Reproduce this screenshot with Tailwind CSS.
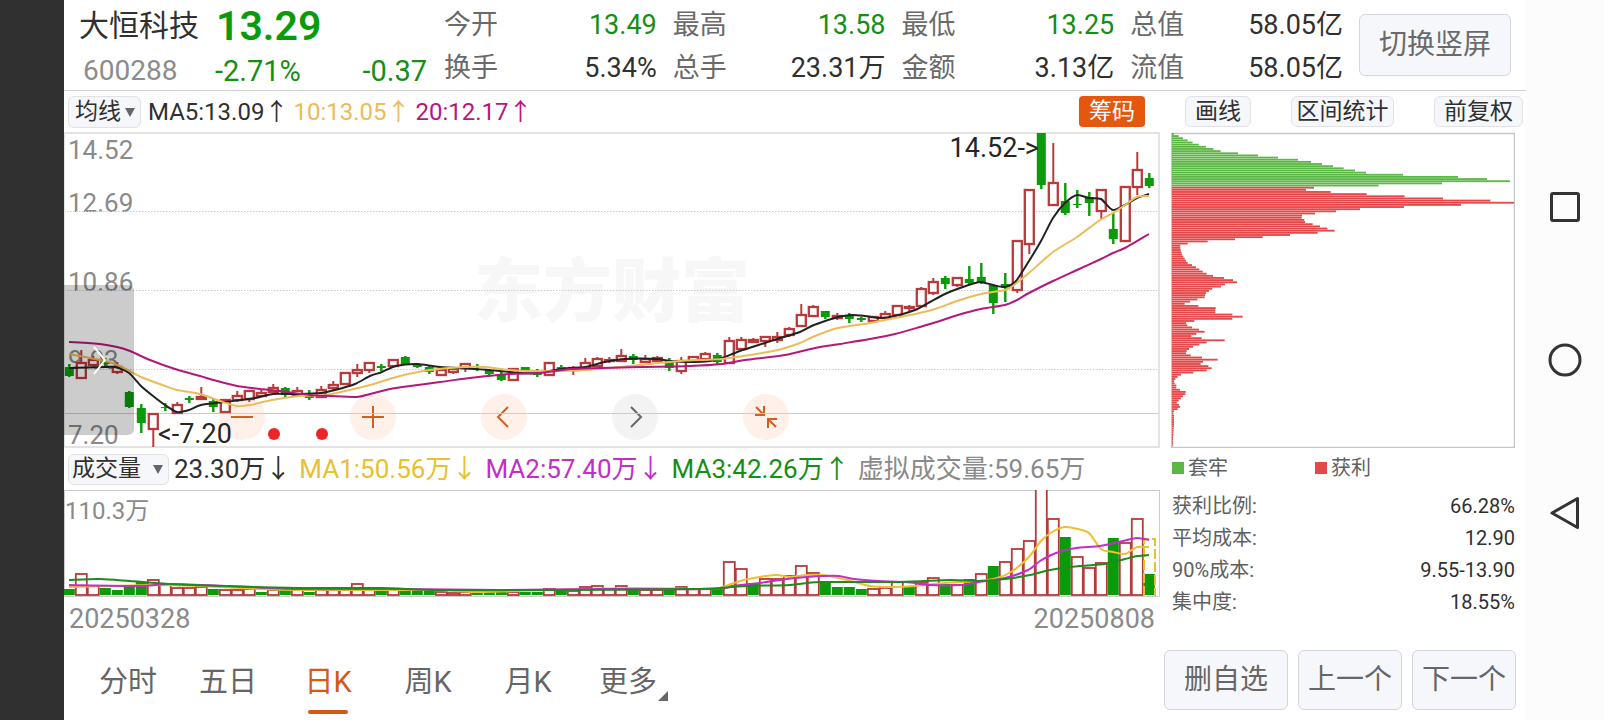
<!DOCTYPE html>
<html lang="zh-CN">
<head>
<meta charset="utf-8">
<meta name="viewport" content="width=device-width, initial-scale=1">
<title>大恒科技 600288</title>
<script src="https://cdn.jsdelivr.net/npm/@tailwindcss/browser@4"></script>
</head>
<body class="bg-white">
<div class="flex min-h-screen font-[Roboto,'Noto_Sans_CJK_SC',sans-serif] text-[#303030]">
  <div class="w-16 shrink-0 bg-[#303030]"></div>

  <main class="flex min-w-0 flex-1 flex-col">
    <header class="flex h-[91px] items-stretch border-b border-[#d2d2d2] pr-[15px]">
      <div class="w-[363px] shrink-0 pl-[15px]">
        <div class="flex h-[51px] items-center gap-[17px]">
          <h1 class="text-[30px] leading-[50px]">大恒科技</h1>
          <strong class="text-[41px] leading-[50px] font-semibold text-[#0a9b0a]">13.29</strong>
        </div>
        <div class="flex h-10 items-center text-[29px] leading-10 text-[#148f14]">
          <span class="w-[136px] pl-1 text-[28px] text-[#8c8c8c]">600288</span>
          <span class="flex-1">-2.71%</span>
          <span>-0.37</span>
        </div>
      </div>
      <dl class="grid flex-1 grid-cols-4 gap-x-4 pt-1 pl-[17px] text-[27px] leading-[42px]">
        <div class="flex justify-between"><dt class="text-[#6a6a6a]">今开</dt><dd class="text-[#148f14]">13.49</dd></div>
        <div class="flex justify-between"><dt class="text-[#6a6a6a]">最高</dt><dd class="text-[#148f14]">13.58</dd></div>
        <div class="flex justify-between"><dt class="text-[#6a6a6a]">最低</dt><dd class="text-[#148f14]">13.25</dd></div>
        <div class="flex justify-between"><dt class="text-[#6a6a6a]">总值</dt><dd>58.05亿</dd></div>
        <div class="flex justify-between"><dt class="text-[#6a6a6a]">换手</dt><dd>5.34%</dd></div>
        <div class="flex justify-between"><dt class="text-[#6a6a6a]">总手</dt><dd>23.31万</dd></div>
        <div class="flex justify-between"><dt class="text-[#6a6a6a]">金额</dt><dd>3.13亿</dd></div>
        <div class="flex justify-between"><dt class="text-[#6a6a6a]">流值</dt><dd>58.05亿</dd></div>
      </dl>
      <button class="mt-3.5 ml-4 h-[62px] w-[152px] shrink-0 rounded-md border border-[#d3d6dc] bg-[#f6f7fa] text-[28px] text-[#6a6a6a]">切换竖屏</button>
    </header>

    <div class="flex h-[41px] items-center pr-[3px] pl-1 text-[23px]">
      <label class="relative flex">
        <select aria-label="主图指标" class="h-8 w-[73px] appearance-none rounded-md border border-[#e0e2e6] bg-[#f6f7fa] pl-1.5 text-[23px] leading-[29px]"><option>均线</option></select>
        <svg class="pointer-events-none absolute top-3 right-1.5" width="10" height="9" viewBox="0 0 10 9"><path d="M0 0H10L5 9Z" fill="#666"/></svg>
      </label>
      <p class="flex gap-[5px] pl-[7px] text-2xl leading-8 whitespace-nowrap">
        <span>MA5:13.09↑</span><span class="text-[#ecbc58]">10:13.05↑</span><span class="text-[#b5187c]">20:12.17↑</span>
      </p>
      <div class="ml-auto flex gap-10">
        <button class="h-[31px] w-[66px] rounded bg-[#e5570c] leading-[29px] text-white">筹码</button>
        <button class="h-[31px] w-[66px] rounded-md border border-[#e0e2e6] bg-[#f6f7fa] leading-[27px]">画线</button>
        <button class="h-[31px] w-[103px] rounded-md border border-[#e0e2e6] bg-[#f6f7fa] leading-[27px]">区间统计</button>
        <button class="h-[31px] w-[89px] rounded-md border border-[#e0e2e6] bg-[#f6f7fa] leading-[27px]">前复权</button>
      </div>
    </div>

    <div class="flex flex-1">
      <div class="min-w-0 flex-1">
        <section class="relative h-[316px] text-[26px] leading-[30px] text-[#8a8a8a]" aria-label="日K线图">
          <div class="absolute top-[116px] left-[410px] text-[69px] leading-[90px] font-black text-[#f7f7f7]">东方财富</div>
          <span class="absolute top-[3px] left-1">14.52</span>
          <span class="absolute top-14 left-1">12.69</span>
          <span class="absolute top-[135px] left-1">10.86</span>
          <span class="absolute top-[213px] left-1">9.03</span>
          <span class="absolute top-[288px] left-1">7.20</span>
          <div class="absolute top-[262px] left-[155px] flex gap-[85px]">
            <button aria-label="缩小" class="size-[46px] rounded-full bg-[#fff0e9]"><svg viewBox="0 0 46 46" fill="none" stroke="#cf6020" stroke-width="2"><path d="M12 23H34"/></svg></button>
            <button aria-label="放大" class="size-[46px] rounded-full bg-[#fff0e9]"><svg viewBox="0 0 46 46" fill="none" stroke="#cf6020" stroke-width="2"><path d="M12 23H34M23 12V34"/></svg></button>
            <button aria-label="向左" class="size-[46px] rounded-full bg-[#fff0e9]"><svg viewBox="0 0 46 46" fill="none" stroke="#cf6020" stroke-width="2"><path d="M27 13L17 23L27 33"/></svg></button>
            <button aria-label="向右" class="size-[46px] rounded-full bg-[#f3f3f3]"><svg viewBox="0 0 46 46" fill="none" stroke="#666" stroke-width="2"><path d="M19 13L29 23L19 33"/></svg></button>
            <button aria-label="收起" class="size-[46px] rounded-full bg-[#fff0e9]"><svg viewBox="0 0 46 46" fill="none" stroke="#cf6020" stroke-width="2"><path d="M13 13L21 21M21 12V21H12M33 33L25 25M25 34V25H34"/></svg></button>
          </div>
          <svg id="price" class="pointer-events-none absolute inset-0 size-full" viewBox="64 132 1096 316" preserveAspectRatio="none"></svg>
          <span class="absolute top-px right-[121px] text-[27px] text-[#262626]">14.52-&gt;</span>
          <span class="absolute top-[287px] left-[94px] text-[27px] text-[#262626]">&lt;-7.20</span>
          <button aria-label="展开侧栏" class="absolute top-[153px] left-0 h-[150px] w-[70px] rounded-r-md bg-black/20"><svg class="size-full" viewBox="0 0 70 150" fill="none" stroke="#fff" stroke-width="2"><path d="M30 62L41 75L30 89"/></svg></button>
        </section>

        <div class="flex h-[42px] items-center gap-2 pl-1 text-[26px] whitespace-nowrap">
          <div class="flex items-center gap-[5px]">
            <label class="relative flex">
              <select aria-label="副图指标" class="h-[31px] w-[101px] appearance-none rounded-md border border-[#e0e2e6] bg-[#f6f7fa] pl-[3px] text-[23px] leading-[28px]"><option>成交量</option></select>
              <svg class="pointer-events-none absolute top-[11px] right-1.5" width="10" height="9" viewBox="0 0 10 9"><path d="M0 0H10L5 9Z" fill="#666"/></svg>
            </label>
            <span>23.30万↓</span>
          </div>
          <span class="text-[#e8c030]">MA1:50.56万↓</span>
          <span class="text-[#c030c8]">MA2:57.40万↓</span>
          <span class="text-[#148f14]">MA3:42.26万↑</span>
          <span class="text-[#8a8a8a]">虚拟成交量:59.65万</span>
        </div>

        <section class="relative h-[107px]" aria-label="成交量图">
          <span class="absolute top-1.5 left-px text-2xl leading-[30px] text-[#8a8a8a]">110.3万</span>
          <svg id="volume" class="absolute inset-0 size-full" viewBox="64 490 1096 107" preserveAspectRatio="none"></svg>
        </section>
        <div class="flex justify-between px-[5px] text-[27px] leading-[44px] text-[#8a8a8a]"><span>20250328</span><span>20250808</span></div>
      </div>

      <aside class="w-[366px] shrink-0 px-[11px] text-[#606060]">
        <svg id="chips" class="block h-[316px] w-full" viewBox="1171 132 344 316" preserveAspectRatio="none" role="img" aria-label="筹码分布"></svg>
        <div class="flex h-10 items-center pl-px text-xl">
          <span class="flex w-[143px] items-center gap-1"><i class="size-3 bg-[#5cb845]"></i>套牢</span>
          <span class="flex items-center gap-1"><i class="size-3 bg-[#e54848]"></i>获利</span>
        </div>
        <table class="mt-0.5 w-full text-xl leading-8">
          <tr><th scope="row" class="pl-px text-left font-normal">获利比例:</th><td class="text-right text-[#303030]">66.28%</td></tr>
          <tr><th scope="row" class="pl-px text-left font-normal">平均成本:</th><td class="text-right text-[#303030]">12.90</td></tr>
          <tr><th scope="row" class="pl-px text-left font-normal">90%成本:</th><td class="text-right text-[#303030]">9.55-13.90</td></tr>
          <tr><th scope="row" class="pl-px text-left font-normal">集中度:</th><td class="text-right text-[#303030]">18.55%</td></tr>
        </table>
      </aside>
    </div>

    <footer class="flex h-20 justify-between pr-2.5 pl-3.5 text-[#666]">
      <nav class="flex text-[29px] leading-10" aria-label="周期">
        <a href="#" class="w-[100px] pt-[21px] text-center">分时</a>
        <a href="#" class="w-[100px] pt-[21px] text-center">五日</a>
        <a href="#" aria-current="page" class="flex w-[100px] flex-col items-center pt-[21px] text-[#d25a14]">日K<span class="mt-2 h-1 w-10 rounded-sm bg-[#d25a14]"></span></a>
        <a href="#" class="w-[100px] pt-[21px] text-center">周K</a>
        <a href="#" class="w-[100px] pt-[21px] text-center">月K</a>
        <a href="#" class="relative w-[100px] pt-[21px] text-center">更多<svg class="absolute right-2.5 bottom-5" width="10" height="10" viewBox="0 0 10 10"><path d="M10 0V10H0Z" fill="#666"/></svg></a>
      </nav>
      <div class="flex gap-2.5 pt-[9px] text-[28px]">
        <button class="h-[60px] w-[124px] rounded-md border border-[#d3d6dc] bg-[#f6f7fa]">删自选</button>
        <button class="h-[60px] w-[104px] rounded-md border border-[#d3d6dc] bg-[#f6f7fa]">上一个</button>
        <button class="h-[60px] w-[104px] rounded-md border border-[#d3d6dc] bg-[#f6f7fa]">下一个</button>
      </div>
    </footer>
  </main>

  <nav class="flex w-[78px] shrink-0 flex-col items-center justify-center gap-[117px] bg-[#fcfcfc] pb-0.5" aria-label="系统导航">
    <button aria-label="最近任务"><svg class="block" width="36" height="36" viewBox="0 0 36 36" fill="none" stroke="#333" stroke-width="3"><rect x="4.5" y="4.5" width="27" height="27" rx="1.5"/></svg></button>
    <button aria-label="主屏幕"><svg class="block" width="36" height="36" viewBox="0 0 36 36" fill="none" stroke="#333" stroke-width="3"><circle cx="18" cy="18" r="15"/></svg></button>
    <button aria-label="返回"><svg class="block" width="36" height="36" viewBox="0 0 36 36" fill="none" stroke="#333" stroke-width="3" stroke-linejoin="round"><path d="M30.500 3.500V32.500L5 18Z"/></svg></button>
  </nav>
</div>

<script>
const UP = '#b93a3a', DOWN = '#0a9b0a';
const X0 = 69.3, STEP = 12;

// direction, body top, body bottom, high, low
const candles = `g 367 376 364 377|r 363 378 350 379|r 360 365 356 365|g 362 364 358 368|r 367 372 362 374|g 392 407 391 408|g 408 423 404 433|r 414 429 414 447|g 407 408 403 411|r 405 413 402 414|g 398 400 396 403|r 397 399 387 400|g 401 407 398 412|r 400 412 399 412|r 396 400 391 402|r 391 399 391 402|r 393 396 390 397|r 388 392 384 394|g 388 395 387 397|r 391 395 387 397|g 394 398 390 400|r 390 397 386 398|r 385 388 381 390|r 373 384 373 385|r 370 373 364 377|r 363 370 363 373|g 366 368 364 371|r 360 366 359 367|g 357 365 356 365|g 365 367 363 368|g 367 372 366 374|r 370 375 369 376|r 369 372 367 374|r 364 368 363 372|g 366 367 364 371|g 370 374 369 375|g 375 380 371 381|r 369 380 369 380|g 367 370 367 371|g 373 375 369 377|r 363 375 363 375|g 367 369 365 371|r 368 370 366 375|r 363 368 358 368|r 359 366 357 366|r 360 361 357 363|r 356 361 349 361|g 356 360 354 364|r 359 362 355 362|r 358 361 356 361|g 361 368 358 371|r 361 371 357 374|r 357 361 357 361|r 354 359 352 359|g 355 362 353 364|r 341 363 337 364|r 340 349 337 351|r 340 342 338 343|r 337 341 337 347|r 337 340 332 343|r 329 335 327 337|r 315 326 304 327|r 307 316 305 317|g 311 317 311 319|r 316 318 313 320|g 315 319 313 323|g 318 320 317 322|r 317 321 317 321|r 314 318 311 318|r 306 315 305 315|r 307 308 305 311|r 289 306 287 307|r 282 293 278 295|g 278 284 276 289|r 278 285 277 287|g 279 283 266 284|g 277 282 263 284|g 285 303 284 314|g 284 287 273 302|r 241 290 241 293|r 190 244 190 254|g 133 185 133 189|r 183 205 143 205|g 201 213 183 215|g 204 205 190 208|g 197 203 192 216|r 190 211 190 220|g 229 239 213 244|r 187 241 186 241|r 170 187 152 195|g 178 186 173 188`.split('|').map(s => s.split(' '));

// direction and bar top
const volumes = 'g589 r574 r586 g588 g590 g585 g582 r580 r585 r588 r588 r587 g589 r590 r590 r589 g592 r590 g590 r590 g592 r590 r590 r589 r584 r589 g590 r590 g591 g591 g591 r592 r593 r592 g592 g592 g592 r592 g592 g592 r589 g589 r591 r587 r586 r589 r586 g589 r590 r590 g590 r587 r589 r589 g588 r562 r569 g583 r579 r579 r576 r566 r573 g582 g587 g587 g589 r589 r588 r582 g586 r583 r578 g584 r585 g579 r574 g566 r562 r549 r541 r480 r519 g537 r557 r568 r563 g538 r543 r519 g574'.split(' ');

function candle([dir, top, bottom, high, low], i) {
  const x = X0 + STEP * i, c = dir === 'g' ? DOWN : UP;
  const t = +top, h = Math.max(bottom - top, 1);
  const wick = `<path d="M${x} ${high}V${t}M${x} ${+bottom}V${low}" stroke="${c}" stroke-width="2"/>`;
  return wick + (dir === 'g'
    ? `<path d="M${x} ${high}V${low}" stroke="${c}" stroke-width="2"/><rect x="${x - 4.5}" y="${t}" width="9" height="${h}" fill="${c}"/>`
    : `<rect x="${x - 4.5}" y="${t}" width="9" height="${h}" fill="#fff" stroke="${c}" stroke-width="2.300"/>`);
}

// Smooth curve through the points (Catmull-Rom converted to cubic segments)
function curve(points, colour) {
  const p = points.split(' ').map(s => s.split(',').map(Number));
  let d = `M${p[0]}`;
  for (let i = 0; i < p.length - 1; i++) {
    const a = p[i - 1] || p[i], b = p[i], c = p[i + 1], e = p[i + 2] || c;
    d += `C${b[0] + (c[0] - a[0]) / 8} ${b[1] + (c[1] - a[1]) / 8} ${c[0] - (e[0] - b[0]) / 8} ${c[1] - (e[1] - b[1]) / 8} ${c}`;
  }
  return `<path d="${d}" fill="none" stroke="${colour}" stroke-width="2"/>`;
}

document.getElementById('price').innerHTML =
  [211.5, 290.5, 369.5].map(y => `<path d="M64 ${y}H1159" stroke="#ccc" stroke-dasharray="1.500 1.500"/>`).join('') +
  '<path d="M64 413.500H1159" stroke="#ccc"/>' +
  '<path d="M64 133H1159V447H64" fill="none" stroke="#e3e3e3" stroke-width="2"/>' +
  '<path d="M64.500 132V448" stroke="#e3e3e3"/>' +
  candles.map(candle).join('') +
  curve('69,368 105,367 115,367 129,373 141,386 153,396 165,405 177,412 189,410 201,405 225,402 249,399 260,397 273,394 300,394 321,393 335,390 355,384 370,376 382,372 396,366 417,364 440,367 475,369 500,371 520,373 537,373 555,370 570,368 585,367 605,362 625,359 656,359 671,361 690,362 710,361 722,358 740,351 765,343 777,339 800,332 814,325 838,317 852,315 865,316 880,318 895,316 915,310 930,302 945,294 960,288 975,283 981,282 993,285 1005,287 1016,281 1029,261 1041,241 1053,218 1065,203 1077,195 1089,198 1101,199 1113,210 1130,202 1137,198 1149,194', '#222') +
  curve('69,354 105,361 120,366 141,377 165,386 177,390 200,394 220,401 237,406 250,405 272,400 300,396 325,395 345,391 370,385 400,376 430,370 465,367 485,367 510,370 530,371 560,371 585,370 610,368 640,365 680,361 722,359 750,355 778,350 800,343 815,336 838,328 870,323 895,318 915,314 935,309 957,301 981,294 1000,291 1008,289 1018,282 1030,272 1053,252 1077,237 1100,220 1113,213 1125,205 1137,197 1149,196', '#ecbc58') +
  curve('69,342 100,344 117,347 130,351 150,360 175,369 200,376 217,381 237,386 260,389 280,391 310,395 330,396 357,397 370,394 390,389 410,386 440,382 470,378 510,374 540,373 570,369 600,368 640,367 690,366 722,364 745,360 785,355 815,348 840,344 870,339 895,334 920,327 940,321 958,315 981,309 1005,305 1017,300 1029,293 1053,281 1077,270 1101,259 1113,253 1125,248 1149,234', '#b5187c') +
  '<circle cx="274" cy="434" r="6" fill="#ee2525"/><circle cx="322" cy="434" r="6" fill="#ee2525"/>';

document.getElementById('volume').innerHTML =
  '<rect x="64.500" y="490.500" width="1095" height="106" fill="none" stroke="#ccc"/>' +
  volumes.map((v, i) => {
    const x = X0 + STEP * i, top = +v.slice(1);
    return v[0] === 'g'
      ? `<rect x="${x - 5.5}" y="${top}" width="11" height="${595 - top}" fill="${DOWN}"/>`
      : `<rect x="${x - 5.5}" y="${top}" width="11" height="${595 - top}" fill="#fff" stroke="${UP}" stroke-width="1.800"/>`;
  }).join('') +
  '<path d="M1144 596V539H1155V596" fill="none" stroke="#e8c030" stroke-width="2" stroke-dasharray="10 3"/>' +
  curve('69,587 110,586 150,585 200,586 260,589 300,590 430,590 480,592 550,590 632,588 708,589 720,588 734,583 748,579 776,575 789,577 807,575 823,575 847,580 870,586 890,587 914,586 945,583 979,581 997,578 1011,572 1028,558 1041,541 1052,532 1065,527 1078,529 1089,533 1101,549 1113,552 1125,554 1137,547 1149,547', '#ecc030') +
  curve('69,585 140,586 170,584 230,586 300,589 400,589 500,590 600,589 716,589 732,586 760,583 787,579 807,577 823,576 839,576 854,579 878,581 906,582 930,585 961,585 979,582 1005,578 1028,570 1040,561 1056,553 1076,548 1100,546 1123,541 1137,538 1149,540', '#c030c8') +
  curve('69,580 100,579 130,581 170,584 220,586 300,588 380,588 440,590 550,590 700,589 745,586 790,585 820,582 900,582 950,580 980,581 1005,579 1030,575 1050,570 1080,566 1105,564 1125,559 1137,556 1149,555', '#1c8c1c');

// Chip distribution: bar lengths from the highest price level down, 3 units per pixel
const chips = [6,20,33,47,62,80,102,124,146,198,258,318,378,417,450,483,515,549,582,693,858,945,1014,810,620,426,402,476,584,698,813,955,1026,867,696,564,492,429,390,389,397,399,422,444,466,488,437,354,272,189,107,47,25,25,26,28,30,34,38,42,47,60,72,82,92,104,123,156,183,195,159,147,121,111,102,99,98,76,54,38,79,131,130,130,181,212,181,67,42,46,60,81,98,73,58,89,158,104,82,63,51,44,42,56,90,137,93,86,109,119,104,64,27,17,10,6,8,13,13,24,41,40,33,27,20,14,21,24,17,6,4,6,6,6,6,6,6,5,5,4,4,3,3,3,3,2];
document.getElementById('chips').innerHTML =
  '<rect x="1171.500" y="133.500" width="343" height="314" fill="none" stroke="#c6c6c6" stroke-width="1.500"/>' +
  chips.map((n, i) => `<rect x="1172" y="${133 + 2.15 * i}" width="${n / 3}" height="1.850" fill="${i < 25 ? '#5cb845' : '#e54848'}"/>`).join('');
</script>
</body>
</html>
